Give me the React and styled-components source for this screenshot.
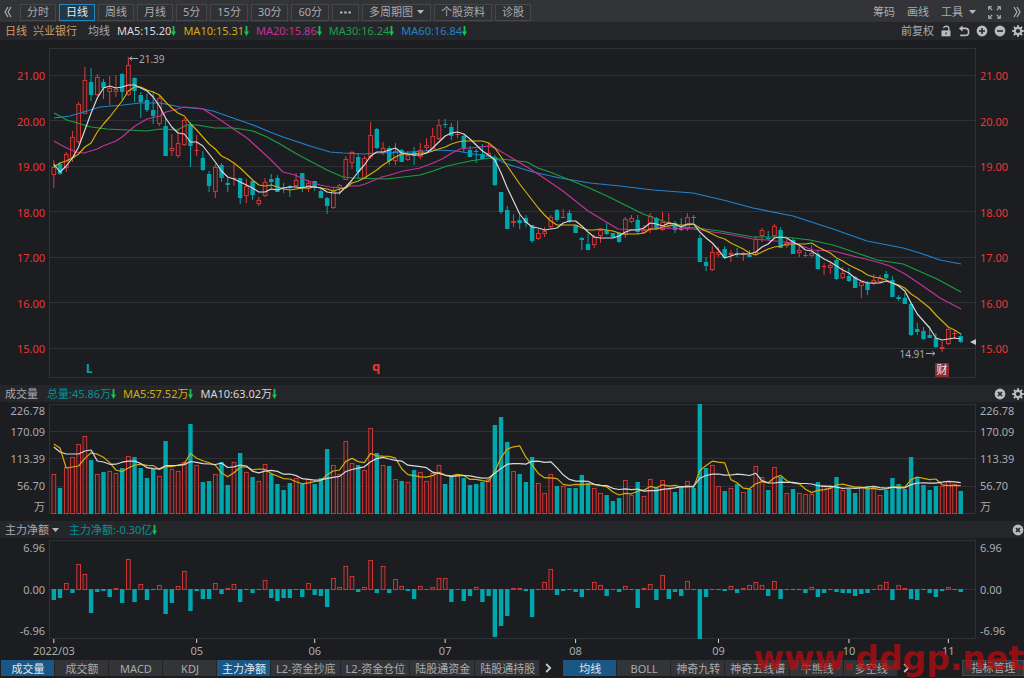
import React from 'react'
import styled, { createGlobalStyle } from 'styled-components'

const GlobalStyle = createGlobalStyle`
    * {
        box-sizing: border-box;
    }
    body {
        margin: 0;
        background: #1c1d20;
        color: #a9abae;
        font-family: "Noto Sans", "Noto Sans CJK SC", sans-serif;
        font-size: 11px;
        line-height: 16px;
        overflow: hidden;
    }
    button {
        font: inherit;
        color: inherit;
        margin: 0;
        padding: 0;
        border: none;
        background: none;
        white-space: nowrap;
        cursor: pointer;
    }
    svg {
        display: block;
        flex: none;
    }
`

const Page = styled.main`
    display: flex;
    flex-direction: column;
    min-height: 100vh;
`

const Toolbar = styled.nav`
    display: flex;
    align-items: center;
    gap: 3px;
    height: 22px;
    padding: 2px 3px 0 4px;
    background: #333438;
`

const PeriodButton = styled.button`
    display: flex;
    align-items: center;
    justify-content: center;
    gap: 4px;
    height: 17px;
    min-width: 27px;
    padding: 0 6px;
    border: 1px solid ${props => props.$active ? '#2585bd' : '#46474b'};
    background: ${props => props.$active ? '#20384b' : '#303135'};
    color: ${props => props.$active ? '#e4e8ec' : '#a9abae'};
`

const Collapse = styled.button`
    width: 13px;
`

const Tools = styled.div`
    display: flex;
    align-items: center;
    gap: 12px;
    margin-left: auto;
`

const ToolButton = styled.button`
    display: flex;
    align-items: center;
    gap: 6px;
`

const InfoBar = styled.header`
    display: flex;
    align-items: center;
    gap: 7px;
    height: ${props => props.$tall ? '18px' : '17px'};
    padding-left: 5px;
    background: #25262a;
    white-space: nowrap;
`

const Stock = styled.span`
    display: flex;
    gap: 6px;
    margin-right: 4px;
    color: #cf9c66;
`

const PanelName = styled.span`
    margin-right: 2px;
`

const PanelSelect = styled.button`
    display: flex;
    align-items: center;
    gap: 3px;
    margin-right: 3px;
`

const Reading = styled.span`
    display: flex;
    align-items: center;
    color: ${props => props.$color};
`

const IconRow = styled.div`
    display: flex;
    align-items: center;
    gap: 6px;
    margin-left: auto;
`

const Panel = styled.section`
    display: grid;
    grid-template-columns: 49px minmax(0, 1fr) 48px;
    grid-template-rows: minmax(0, 1fr);
    flex: ${props => props.$size} 1 ${props => props.$size}px;
    min-height: 0;
    margin: ${props => props.$margin};
`

const Axis = styled.div`
    display: flex;
    flex-direction: column;
    justify-content: space-between;
    padding: ${props => props.$pad || '0 4px'};
    text-align: ${props => props.$left ? 'right' : 'left'};
    color: ${props => props.$color || '#a9abae'};
`

const VolumeAxis = styled(Axis)`
    display: grid;
    grid-template-rows: minmax(0, 14fr) repeat(3, minmax(0, 27fr)) minmax(0, 15fr);
    align-items: center;
    justify-content: stretch;
    line-height: 14px;
`

const Plot = styled.svg`
    width: 100%;
    height: 100%;
    overflow: visible;
    font-size: 11px;
`

const DateRow = styled.div`
    height: 21px;
    padding: 0 48px 0 49px;
`

const Tabs = styled.nav`
    display: flex;
    align-items: center;
    height: 18px;
    padding: 0 0 2px 1px;
`

const Tab = styled.button`
    min-width: 54px;
    height: 16px;
    padding: 0 4px 0 5px;
    line-height: 15px;
    border-right: 1px solid #222327;
    background: ${props => props.$active ? '#1a5785' : '#333438'};
    color: ${props => props.$active ? '#e4e8ec' : '#a9abae'};
`

const NextTabs = styled.button`
    display: flex;
    padding-left: 5px;
    width: 23px;
`

const ManageButton = styled(Tab)`
    min-width: 62px;
    margin-left: auto;
    border: 1px solid #46474b;
    line-height: 14px;
`

const Watermark = styled.div`
    position: absolute;
    right: 0;
    bottom: 0;
    color: rgba(190, 10, 14, 0.72);
    font: bold 33px/38px "DejaVu Sans", sans-serif;
    pointer-events: none;
`

const RED = '#e03a3a'
const LABEL_RED = '#ee3434'
const TEAL = '#00a6ad'
const WHITE = '#d8d8da'
const YELLOW = '#d4ad0a'
const PINK = '#c1339a'
const GREEN = '#17a045'
const BLUE = '#2083d2'
const GRID = '#303135'

// r = up, t = down; then high, body top, body bottom, low
const candles = `r160,167,175,188 t162,164,174,175 r152,154,168,172 r131,137,158,162 r102,104,142,144
r67,80,114,114 t68,82,95,101 r74,77,95,96 t79,82,88,99 r76,88,92,105
r75,89,92,97 t73,74,92,100 r57,65,95,96 t77,78,91,102 t92,95,102,118
t94,100,110,112 t91,110,116,124 r95,98,124,126 t118,126,156,156 r134,148,151,156
r130,143,156,158 r118,120,145,146 t122,124,146,167 r135,150,151,156 t151,158,170,171
t171,174,186,192 r164,167,192,198 t163,165,178,182 t178,183,185,192 r162,178,179,186
t178,178,198,204 r179,186,196,203 t180,181,195,200 r197,200,204,206 r178,182,196,197
t174,179,182,188 t175,178,192,192 t183,187,188,193 t185,186,188,197 r173,180,186,187
t173,173,188,192 r180,183,189,192 t181,181,187,191 t187,191,198,198 t197,198,206,214
r187,191,208,209 r184,185,188,195 r156,159,180,180 r151,152,163,169 t153,157,172,179
r156,158,179,179 r122,135,157,159 t128,129,148,149 r142,148,153,155 t146,148,161,165
r143,151,161,165 t149,150,162,162 r151,155,160,161 t147,152,156,165 r143,150,157,159
r138,145,148,151 r128,136,149,149 r119,125,139,140 t119,124,125,128 t123,127,136,140
r121,134,135,138 t135,136,148,152 t146,150,157,157 t149,151,152,163 t144,154,159,159
r143,153,156,157 t155,157,185,186 t192,192,212,214 t206,210,229,229 r214,221,223,227
t215,220,223,229 t215,218,223,227 t225,225,241,243 r229,233,239,240 r227,231,234,237
r215,217,227,229 t209,210,220,222 r209,217,218,218 t210,213,222,223 t225,225,233,233
t237,238,240,250 t234,244,250,250 r235,237,245,248 r229,230,236,243 t223,230,234,235
t233,233,237,238 t232,233,242,243 r217,219,235,238 r215,218,222,223 t215,220,232,234
r225,230,233,234 r213,216,229,233 t217,218,229,230 r212,222,230,231 r213,222,226,228
t221,223,230,233 t218,229,230,231 r213,217,229,231 t215,217,218,223 t235,238,262,262
t257,262,266,271 r246,252,270,271 r247,252,255,257 t246,249,258,259 r250,253,255,262
t248,253,254,257 r252,253,255,261 t250,255,257,257 r236,239,253,255 r228,230,236,242
t231,238,239,240 r224,226,236,237 t227,230,248,248 r239,242,246,248 t238,240,254,254
r245,250,253,257 r252,255,256,257 r245,253,256,257 t250,254,269,270 r263,266,267,275
r262,265,268,274 t259,260,279,280 r267,273,278,279 t268,276,281,282 t276,277,288,288
r281,282,286,298 t281,283,290,295 r274,280,284,285 r275,278,282,283 t271,274,278,279
t276,280,297,297 t295,297,299,301 t293,298,304,304 t302,304,335,336 t323,329,332,335
t327,331,339,340 t326,335,338,338 t333,338,347,348 r341,347,349,352 r327,329,344,345
r330,333,334,338 t333,336,342,343`.split(/\s+/).map(item => ({
    up: item[0] === 'r',
    values: item.slice(1).split(',').map(Number),
}))

const ma5 = [164,172,166,158,147,130,113,98,88,86,88,87,85,85,88,91,97,106,118,127,133,134,142,142,146,154,162,171,177,179,182,185,188,192,192,189,190,
    188,187,187,188,186,187,188,192,193,193,187,180,172,165,156,152,152,150,148,153,154,155,155,153,148,142,136,133,132,134,139,145,151,155,160,173,188,201,214,222,
    227,228,230,229,228,223,221,221,226,232,237,238,238,238,236,232,230,230,228,223,224,226,223,224,227,224,224,232,238,243,250,258,256,254,254,254,252,247,244,238,
    237,238,242,245,250,251,255,259,262,266,270,273,278,281,283,283,283,281,283,286,291,303,314,321,328,338,340,339,338,339]

const ma10 = [167,163,161,158,154,147,143,132,124,117,109,101,91,87,87,90,92,95,102,108,113,116,124,130,137,144,149,156,159,163,168,174,180,185,186,185,187,
    189,190,189,188,188,187,188,189,191,189,188,183,181,178,174,170,165,161,157,154,154,154,153,153,151,149,147,144,142,141,141,141,141,143,148,157,166,175,184,192,
    200,208,215,221,225,225,225,225,228,230,230,229,230,231,233,234,234,234,233,229,229,227,226,225,225,225,224,228,231,234,237,239,243,246,249,253,255,252,249,247,
    246,244,244,244,244,243,247,250,253,258,261,265,268,271,275,277,278,280,283,285,288,294,298,303,308,315,321,327,330,334]

const ma20 = '54,141 61,145 69,149 76,152 84,153 97,149 103,146 116,141 122,137 129,131 135,126 147,119 160,116 166,112 178,109 184,107 197,108 203,109 222,121 235,130 247,138 258,148 270,159 283,172 295,175 308,181 320,185 330,187 342,188 350,186 358,186 365,184 382,177 390,175 403,171 420,168 433,163 442,159 452,153 460,149 470,148 489,146 495,148 527,167 538,174 563,191 588,211 618,229 643,230 667,228 693,229 727,234 753,239 767,240 793,243 813,250 833,251 857,257 877,262 890,266 905,274 920,284 940,298 961,309'
const ma30 = '54,113 67,120 77,123 91,127 107,129 147,131 160,129 177,130 187,125 197,125 215,128 233,128 247,130 253,131 267,137 280,144 295,153 308,160 327,170 343,177 353,178 387,179 403,177 420,175 433,171 447,166 470,161 490,158 510,160 527,162 538,168 550,172 587,187 607,196 623,204 643,214 660,220 680,227 697,228 720,231 753,237 783,237 793,238 810,240 833,245 857,253 877,260 903,264 937,279 961,292'
const ma60 = '54,118 70,116 87,111 100,107 123,105 140,103 160,103 180,107 203,109 213,111 233,118 253,125 270,132 283,137 310,146 330,152 343,153 363,154 377,153 410,152 437,150 457,151 473,154 493,157 507,164 533,172 560,178 590,183 620,186 653,190 693,193 723,200 753,208 793,216 833,229 867,241 903,248 920,253 940,260 961,264'

const volumes = [474,488,467,457,444,436,460,474,472,471,473,468,456,457,468,478,469,476,441,469,471,462,424,465,482,481,474,462,485,462,453,472,477,481,464,474,484,
    490,483,478,484,479,484,478,449,465,474,441,463,465,470,428,453,465,466,479,481,482,470,472,481,473,465,484,476,474,478,485,484,482,479,425,417,442,471,474,482,
    457,483,493,474,486,486,488,488,475,483,488,493,495,501,498,480,495,482,496,479,487,480,489,492,487,481,488,404,468,465,486,491,488,484,492,489,466,477,490,467,
    477,493,489,493,494,494,482,485,487,477,490,489,493,487,486,487,495,490,478,484,489,457,477,485,490,486,486,481,484,491]

const flows = [-11,-9,6,-4,25,15,-24,-3,-2,-8,1,-14,30,-13,5,-11,-1,4,-25,-14,3,18,-22,-2,-10,-10,6,-5,1,5,-13,-1,-4,-1,9,-9,-12,
    -9,-9,-1,-8,6,-6,-7,-18,11,2,23,13,-3,2,29,-4,23,-4,10,3,-2,-10,3,0,2,11,11,-13,0,-12,-7,2,-13,-7,-48,-37,-27,1,1,-2,
    -28,-1,7,20,-6,-2,-1,-3,-8,-1,7,4,-7,0,-3,3,-1,-19,1,5,-11,14,-10,-3,-7,8,-1,-50,-8,0,-1,-2,3,-4,1,4,7,4,-7,8,
    -10,-1,-1,-1,-4,2,-8,-4,-1,-3,-4,-4,-7,-5,-4,0,4,7,-11,4,1,-10,-11,-1,-4,-8,-2,2,-1,-3]

const months = [[0, '2022/03'], [23, '05'], [42, '06'], [63, '07'], [84, '08'], [107, '09'], [128, '10'], [144, '11']]

const xAt = i => 53.8 + i * 6.212
const toPoints = ys => ys.map((y, i) => `${xAt(i).toFixed(1)},${y}`).join(' ')

const average = (list, size, start) => list.map((v, i) => {
    if (i < start.length) return start[i]
    return list.slice(i - size + 1, i + 1).reduce((a, b) => a + b, 0) / size
})

const Line = ({ points, color }) => <polyline points={points} fill="none" stroke={color} strokeWidth="1.2" strokeLinejoin="round" />

const Bar = ({ x, top, bottom, up }) => {
    const height = bottom - top
    if (!up || height < 2) {
        return <rect x={x - 2.2} y={top} width="4.4" height={Math.max(height, 1)} fill={up ? RED : TEAL} />
    }
    return <rect x={x - 1.8} y={top + 0.4} width="3.7" height={height - 0.8} fill="#2b1c20" stroke={RED} strokeWidth="0.9" />
}

const Frame = ({ y, height, lines }) => (
    <g stroke={GRID} fill="none">
        <rect x="49.5" y={y + 0.5} width="926" height={height - 1} />
        {lines.map(line => <path key={line} d={`M50 ${line}H976`} />)}
    </g>
)

const Down = () => (
    <svg width="5" height="12" viewBox="0 0 5 12" aria-hidden="true">
        <path d="M1.6 1h1.8v5.6H5L2.5 11 0 6.6h1.6z" fill="#14c256" />
    </svg>
)

const Caret = () => (
    <svg width="7" height="4" viewBox="0 0 7 4" aria-hidden="true">
        <path d="M0 0h7L3.5 4z" fill="#b4b6b9" />
    </svg>
)

const DoubleChevron = ({ flip }) => (
    <svg width="8" height="12" viewBox="0 0 8 12" aria-hidden="true">
        <path d={flip ? 'M1 1l3 5-3 5M4 1l3 5-3 5' : 'M4 1L1 6l3 5M7 1L4 6l3 5'} fill="none" stroke="#b4b6b9" strokeWidth="1.1" />
    </svg>
)

const Chevron = () => (
    <svg width="7" height="10" viewBox="0 0 7 10" aria-hidden="true">
        <path d="M1.2 1l4 4-4 4" fill="none" stroke="#c6c8ca" strokeWidth="1.8" />
    </svg>
)

const Expand = () => (
    <svg width="13" height="13" viewBox="0 0 13 13" aria-hidden="true">
        <path d="M.7 4V.7H4M.7.7l3.5 3.5M9 .7h3.3V4M12.3.7L8.8 4.2M.7 9v3.3H4M.7 12.3l3.5-3.5M9 12.3h3.3V9M12.3 12.3L8.8 8.8" fill="none" stroke="#b4b6b9" strokeWidth="1.1" />
    </svg>
)

const Lock = () => (
    <svg width="12" height="12" viewBox="0 0 12 12" aria-hidden="true">
        <path d="M3.6 3.3C3.6.6 8.9.4 8.9 3.6V6" fill="none" stroke="#b9bbbd" strokeWidth="1.3" />
        <path d="M1.5 5.4h9v5.9h-9z" fill="#b9bbbd" />
        <path d="M5.4 7.4h1.3v1.8H5.4z" fill="#25262a" />
    </svg>
)

const Undo = () => (
    <svg width="12" height="12" viewBox="0 0 12 12" aria-hidden="true">
        <path d="M3 3.4h4.6c4 0 4 7 0 7H2.2" fill="none" stroke="#b9bbbd" strokeWidth="1.6" />
        <path d="M4.6.4v6L.8 3.4z" fill="#b9bbbd" />
    </svg>
)

const Round = ({ d }) => (
    <svg width="12" height="12" viewBox="0 0 12 12" aria-hidden="true">
        <circle cx="6" cy="6" r="5.4" fill="#b9bbbd" />
        <path d={d} stroke="#25262a" strokeWidth="1.6" />
    </svg>
)

const Gear = () => (
    <svg width="12" height="12" viewBox="0 0 12 12" aria-hidden="true">
        {[0, 45, 90, 135].map(angle => (
            <path key={angle} d="M6 .2v2.4M6 9.4v2.4" stroke="#b9bbbd" strokeWidth="2" transform={`rotate(${angle} 6 6)`} />
        ))}
        <circle cx="6" cy="6" r="3.2" fill="none" stroke="#b9bbbd" strokeWidth="2.2" />
    </svg>
)

const CLOSE = 'M4 4l4 4M8 4L4 8'

const PriceChart = () => (
    <Plot viewBox="49 48 927 330" preserveAspectRatio="none" role="img" aria-label="日线">
        <Frame y={48} height={330} lines={[75.5, 120.5, 166.5, 211.5, 257.5, 302.5, 348.5]} />
        {candles.map(({ up, values: [high, top, bottom, low] }, i) => (
            <g key={i}>
                <path d={`M${xAt(i)} ${high}V${top}M${xAt(i)} ${bottom}V${low}`} stroke={up ? RED : TEAL} strokeWidth="1" />
                <Bar x={xAt(i)} top={top} bottom={bottom} up={up} />
            </g>
        ))}
        <Line points={ma60} color={BLUE} />
        <Line points={ma30} color={GREEN} />
        <Line points={ma20} color={PINK} />
        <Line points={toPoints(ma10)} color={YELLOW} />
        <Line points={toPoints(ma5)} color={WHITE} />
        <path d="M138 58.5h-8.5M132 56.5l-2.5 2 2.5 2M926 353.5h9M932.5 351.5l2.5 2-2.5 2" fill="none" stroke="#a9abae" />
        <text x="139" y="63" fill="#a9abae" fontSize="10">21.39</text>
        <text x="925" y="358" fill="#a9abae" fontSize="10" textAnchor="end">14.91</text>
        <path d="M976 339v6l-6-3z" fill="#c6c8ca" />
        <text x="86" y="373" fill={TEAL} fontWeight="bold" fontSize="12">L</text>
        <text x="372" y="371" fill={RED} fontWeight="bold" fontSize="13">q</text>
        <rect x="935" y="363" width="14" height="14" rx="1" fill="#8c2c2e" />
        <text x="942" y="374" fill="#eee" textAnchor="middle">财</text>
    </Plot>
)

const VolumeChart = () => (
    <Plot viewBox="49 404 927 110" preserveAspectRatio="none" role="img" aria-label="成交量">
        <Frame y={404} height={110} lines={[431.5, 458.5, 486.5]} />
        {volumes.map((top, i) => <Bar key={i} x={xAt(i)} top={top} bottom={514} up={candles[i].up} />)}
        <Line points={toPoints(average(volumes, 5, [444, 448, 468, 467]))} color={YELLOW} />
        <Line points={toPoints(average(volumes, 10, [447, 452, 454, 454, 454, 451, 450, 461, 462]))} color={WHITE} />
    </Plot>
)

const FlowChart = () => (
    <Plot viewBox="49 540 927 99" preserveAspectRatio="none" role="img" aria-label="主力净额">
        <Frame y={540} height={99} lines={[589.5]} />
        {flows.map((value, i) => (
            <Bar key={i} x={xAt(i)} top={value < 0 ? 589 : 589 - value} bottom={value < 0 ? 589 - value : 590} up={value >= 0} />
        ))}
    </Plot>
)

const periods = ['分时', '日线', '周线', '月线', '5分', '15分', '30分', '60分']
const averages = [
    ['MA5:15.20', WHITE],
    ['MA10:15.31', YELLOW],
    ['MA20:15.86', PINK],
    ['MA30:16.24', GREEN],
    ['MA60:16.84', BLUE],
]
const prices = ['21.00', '20.00', '19.00', '18.00', '17.00', '16.00', '15.00']
const volumeLabels = ['226.78', '170.09', '113.39', '56.70', '万']
const flowLabels = ['6.96', '0.00', '-6.96']
const indicators = ['成交量', '成交额', 'MACD', 'KDJ', '主力净额', 'L2-资金抄底', 'L2-资金仓位', '陆股通资金', '陆股通持股']
const overlays = ['均线', 'BOLL', '神奇九转', '神奇五线谱', '牛熊线', '多空线']

const labels = list => list.map(label => <span key={label}>{label}</span>)

class App extends React.Component {
    state = {
        period: '日线',
        active: ['成交量', '主力净额'],
        overlay: '均线',
    }

    trocaIndicador = (name) => {
        const { active } = this.state
        this.setState({
            active: active.includes(name) ? active.filter(item => item !== name) : [...active, name],
        })
    }

    render() {
        const { period, active, overlay } = this.state
        return (
            <Page>
                <GlobalStyle />
                <Toolbar>
                    <Collapse aria-label="收起"><DoubleChevron /></Collapse>
                    {periods.map(name => (
                        <PeriodButton key={name} $active={name === period} onClick={() => this.setState({ period: name })}>
                            {name}
                        </PeriodButton>
                    ))}
                    <PeriodButton aria-label="更多">
                        <svg width="11" height="3" viewBox="0 0 11 3"><path d="M0 .5h2.5v2H0zM4.2.5h2.5v2H4.2zM8.4.5h2.5v2H8.4z" fill="#b4b6b9" /></svg>
                    </PeriodButton>
                    <PeriodButton>多周期图<Caret /></PeriodButton>
                    <PeriodButton>个股资料</PeriodButton>
                    <PeriodButton>诊股</PeriodButton>
                    <Tools>
                        <ToolButton>筹码</ToolButton>
                        <ToolButton>画线</ToolButton>
                        <ToolButton>工具<Caret /></ToolButton>
                        <ToolButton aria-label="全屏"><Expand /></ToolButton>
                        <ToolButton aria-label="展开"><DoubleChevron flip /></ToolButton>
                    </Tools>
                </Toolbar>
                <InfoBar $tall>
                    <Stock><span>日线</span><span>兴业银行</span></Stock>
                    <span>均线</span>
                    {averages.map(([text, color]) => <Reading key={text} $color={color}>{text}<Down /></Reading>)}
                    <IconRow>
                        <button>前复权</button>
                        <button aria-label="锁定"><Lock /></button>
                        <button aria-label="撤销"><Undo /></button>
                        <button aria-label="放大"><Round d="M6 3v6M3 6h6" /></button>
                        <button aria-label="缩小"><Round d="M3 6h6" /></button>
                        <button aria-label="设置"><Gear /></button>
                    </IconRow>
                </InfoBar>
                <Panel $size={330} $margin="8px 0 7px">
                    <Axis $left $pad="20px 4px 21px" $color={LABEL_RED}>{labels(prices)}</Axis>
                    <PriceChart />
                    <Axis $pad="20px 4px 21px" $color={LABEL_RED}>{labels(prices)}</Axis>
                </Panel>
                <InfoBar>
                    <PanelName>成交量</PanelName>
                    <Reading $color="#079199">总量:45.86万<Down /></Reading>
                    <Reading $color={YELLOW}>MA5:57.52万<Down /></Reading>
                    <Reading $color={WHITE}>MA10:63.02万<Down /></Reading>
                    <IconRow>
                        <button aria-label="关闭成交量"><Round d={CLOSE} /></button>
                        <button aria-label="设置成交量"><Gear /></button>
                    </IconRow>
                </InfoBar>
                <Panel $size={110} $margin="2px 0 7px">
                    <VolumeAxis $left>{labels(volumeLabels)}</VolumeAxis>
                    <VolumeChart />
                    <VolumeAxis>{labels(volumeLabels)}</VolumeAxis>
                </Panel>
                <InfoBar>
                    <PanelSelect>主力净额<Caret /></PanelSelect>
                    <Reading $color="#079199">主力净额:-0.30亿<Down /></Reading>
                    <IconRow>
                        <button aria-label="关闭主力净额"><Round d={CLOSE} /></button>
                    </IconRow>
                </InfoBar>
                <Panel $size={99} $margin="2px 0 0">
                    <Axis $left>{labels(flowLabels)}</Axis>
                    <FlowChart />
                    <Axis>{labels(flowLabels)}</Axis>
                </Panel>
                <DateRow>
                    <Plot viewBox="49 639 927 21" preserveAspectRatio="none">
                        {months.map(([i, text]) => (
                            <g key={text} fill="#a9abae">
                                <rect x={xAt(i) - 0.5} y="639" width="1" height="4" fill="#d8d8da" />
                                <text x={xAt(i)} y="655" textAnchor="middle">{text}</text>
                            </g>
                        ))}
                    </Plot>
                </DateRow>
                <Tabs>
                    {indicators.map(name => (
                        <Tab key={name} $active={active.includes(name)} onClick={() => this.trocaIndicador(name)}>{name}</Tab>
                    ))}
                    <NextTabs aria-label="更多指标"><Chevron /></NextTabs>
                    {overlays.map(name => (
                        <Tab key={name} $active={name === overlay} onClick={() => this.setState({ overlay: name })}>{name}</Tab>
                    ))}
                    <NextTabs aria-label="更多主图指标"><Chevron /></NextTabs>
                    <ManageButton>指标管理</ManageButton>
                </Tabs>
                <Watermark>www.ddgp.net</Watermark>
            </Page>
        )
    }
}

export default App
